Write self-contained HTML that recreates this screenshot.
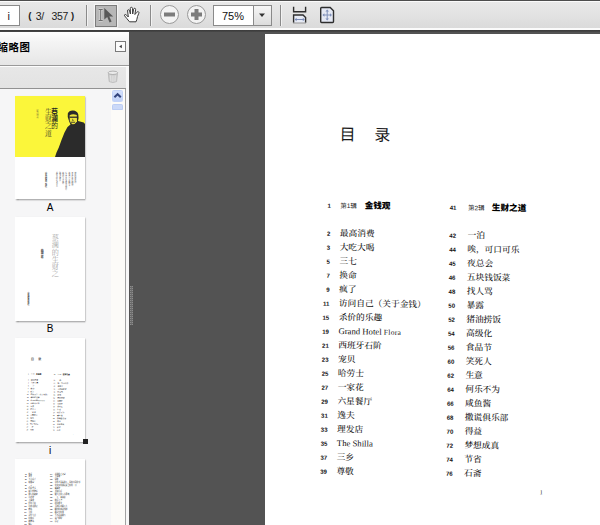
<!DOCTYPE html>
<html lang="zh-CN">
<head>
<meta charset="utf-8">
<title>PDF</title>
<style>
html,body{margin:0;padding:0;}
body{width:600px;height:525px;overflow:hidden;position:relative;background:#535353;font-family:"Liberation Sans","Noto Sans CJK SC",sans-serif;}
.abs{position:absolute;}
#toolbar{left:0;top:0;width:600px;height:30px;background:linear-gradient(#4e4e4e 0,#4e4e4e 1px,#fbfbfb 1px,#fbfbfb 2px,#e9e9e9 2px,#e3e3e3 14px,#dadada 28.5px,#fbfbfb 28.5px,#fbfbfb 30px);}
#tbshadow{left:0;top:30px;width:600px;height:2px;background:linear-gradient(#3a3a3a,#484848);}
.sep{width:1px;background:#8a8a8a;top:5px;height:21px;box-shadow:1px 0 0 #f2f2f2;}
#pginput{left:-1px;top:5px;width:19px;height:19px;background:#fff;border:1px solid #8a8a8a;}
#pgi{left:7.6px;top:9px;font-size:11px;line-height:14px;color:#222;}
.pc{top:9px;font-size:10.5px;line-height:14px;color:#222;white-space:pre;letter-spacing:-0.4px;}
#selbtn{left:95px;top:5px;width:20px;height:20px;background:#b7b7b7;border:1px solid #7c7c7c;box-shadow:0 0 1px 1px rgba(255,255,255,.55);}
#zoombox{left:213px;top:5px;width:57px;height:19px;background:#fff;border:1px solid #8a8a8a;}
#zoomdd{left:253px;top:6px;width:17px;height:19px;background:linear-gradient(#f6f6f6,#dcdcdc);border-left:1px solid #8a8a8a;}
#zoomtxt{left:213.5px;top:8.8px;width:39px;text-align:center;font-size:11px;line-height:14px;color:#111;}
#panel{left:0;top:32px;width:129px;height:493px;background:#efefef;}
#phead{left:0;top:32px;width:129px;height:33px;background:linear-gradient(#ffffff,#f4f4f4 30%,#e6e6e6);}
#pheadline{left:0;top:65px;width:129px;height:1px;background:#9a9a9a;}
#pheadline2{left:0;top:66px;width:129px;height:1px;background:#fdfdfd;}
#ptitle{left:-2.5px;top:39.6px;font-size:10.4px;line-height:16px;font-weight:bold;color:#000;white-space:nowrap;letter-spacing:0.6px;}
#collapse{left:115px;top:41px;width:9px;height:9px;border:1px solid #7a7a7a;background:#fbfbfb;}
#ptool{left:0;top:67px;width:129px;height:21px;background:linear-gradient(#e7e7e7,#e3e3e3);}
#ptoolline{left:0;top:88px;width:126px;height:1px;background:#929292;}
#thumbs{left:0;top:89px;width:111px;height:436px;background:#f6f6f7;}
#sbar{left:111px;top:89px;width:14px;height:436px;background:#fcfbf8;border-right:1px solid #a2a2a2;}
#sbtn{left:112px;top:90px;width:9px;height:10px;background:linear-gradient(#d3e0fc,#c1d2f8);border:1px solid #c3d3f7;border-radius:1.5px;}
#sthumb{left:112px;top:104px;width:9px;height:4px;background:#cbd9f8;border:1px solid #bccdf3;border-radius:1.5px 1.5px 0 0;}
#pright{left:126px;top:67px;width:3px;height:458px;background:#f7f7f7;}
.thumb{background:#fff;box-shadow:0.5px 1px 1.5px rgba(0,0,0,.45);}
.tlabel{font-size:10px;line-height:12px;width:70px;left:15px;text-align:center;color:#000;}
#page{left:265px;top:34px;width:335px;height:491px;background:#fff;}
.num{font-family:"Liberation Sans",sans-serif;font-weight:bold;font-size:6px;line-height:8px;color:#111;width:14px;text-align:right;}
.ent{font-family:"Liberation Serif","Noto Serif CJK SC",serif;font-size:8.7px;line-height:12px;color:#111;font-weight:500;white-space:nowrap;}
.ji{font-family:"Liberation Sans","Noto Sans CJK SC",sans-serif;font-size:6.5px;line-height:8px;color:#222;white-space:nowrap;}
.ttl{font-size:16px;line-height:22px;font-weight:400;color:#1a1a1a;white-space:pre;font-family:"Liberation Sans","Noto Sans CJK SC",sans-serif;letter-spacing:18.7px;}
.pno{font-family:"Liberation Serif",serif;font-size:6px;line-height:8px;color:#222;}
.vt{writing-mode:vertical-rl;overflow:visible;}
.mini{left:0;top:0;width:335px;height:491px;transform-origin:0 0;}
.mini .ent{font-weight:600;color:#111;}
.mini .num,.mini .ji{color:#111;font-size:6.5px;}
.hd{font-family:"Liberation Sans","Noto Sans CJK SC",sans-serif;font-size:8.6px;font-weight:900;line-height:12px;color:#000;white-space:nowrap;}
</style>
</head>
<body>
<!-- main page -->
<div id="page" class="abs">
<div class="abs skew" style="left:0;top:0;width:335px;height:491px;transform-origin:75.3px 171.4px;transform:matrix(1,0.0165,-0.0144,1,0,0);">
<div class="abs ttl" style="left:73.60px;top:90.20px;">目录</div>
<div class="abs num" style="left:51.80px;top:167.70px">1</div>
<div class="abs ji" style="left:75.30px;top:167.70px">第1辑</div>
<div class="abs hd" style="left:99.70px;top:164.60px">金钱观</div>
<div class="abs num" style="left:51.80px;top:196.40px">2</div>
<div class="abs ent" style="left:75.30px;top:193.00px">最高消费</div>
<div class="abs num" style="left:51.80px;top:210.39px">3</div>
<div class="abs ent" style="left:75.30px;top:206.99px">大吃大喝</div>
<div class="abs num" style="left:51.80px;top:224.38px">5</div>
<div class="abs ent" style="left:75.30px;top:220.98px">三七</div>
<div class="abs num" style="left:51.80px;top:238.37px">7</div>
<div class="abs ent" style="left:75.30px;top:234.97px">换命</div>
<div class="abs num" style="left:51.80px;top:252.36px">9</div>
<div class="abs ent" style="left:75.30px;top:248.96px">疯了</div>
<div class="abs num" style="left:51.80px;top:266.35px">11</div>
<div class="abs ent" style="left:75.30px;top:262.95px">访问自己（关于金钱）</div>
<div class="abs num" style="left:51.80px;top:280.34px">15</div>
<div class="abs ent" style="left:75.30px;top:276.94px">杀价的乐趣</div>
<div class="abs num" style="left:51.80px;top:294.33px">19</div>
<div class="abs ent" style="left:75.30px;top:290.93px">Grand Hotel <span style="font-size:7.5px;letter-spacing:.3px">Flora</span></div>
<div class="abs num" style="left:51.80px;top:308.32px">21</div>
<div class="abs ent" style="left:75.30px;top:304.92px">西班牙石阶</div>
<div class="abs num" style="left:51.80px;top:322.31px">23</div>
<div class="abs ent" style="left:75.30px;top:318.91px">宠贝</div>
<div class="abs num" style="left:51.80px;top:336.30px">25</div>
<div class="abs ent" style="left:75.30px;top:332.90px">哈劳士</div>
<div class="abs num" style="left:51.80px;top:350.29px">27</div>
<div class="abs ent" style="left:75.30px;top:346.89px">一家花</div>
<div class="abs num" style="left:51.80px;top:364.28px">29</div>
<div class="abs ent" style="left:75.30px;top:360.88px">六星餐厅</div>
<div class="abs num" style="left:51.80px;top:378.27px">31</div>
<div class="abs ent" style="left:75.30px;top:374.87px">逸夫</div>
<div class="abs num" style="left:51.80px;top:392.26px">33</div>
<div class="abs ent" style="left:75.30px;top:388.86px">理发店</div>
<div class="abs num" style="left:51.80px;top:406.25px">35</div>
<div class="abs ent" style="left:75.30px;top:402.85px">The Shilla</div>
<div class="abs num" style="left:51.80px;top:420.24px">37</div>
<div class="abs ent" style="left:75.30px;top:416.84px">三乡</div>
<div class="abs num" style="left:51.80px;top:434.23px">39</div>
<div class="abs ent" style="left:75.30px;top:430.83px">尊敬</div>
<div class="abs num" style="left:177.50px;top:167.70px">41</div>
<div class="abs ji" style="left:203.00px;top:167.70px">第2辑</div>
<div class="abs hd" style="left:226.90px;top:164.60px">生财之道</div>
<div class="abs num" style="left:177.50px;top:196.40px">42</div>
<div class="abs ent" style="left:202.90px;top:193.00px">一泊</div>
<div class="abs num" style="left:177.50px;top:210.39px">44</div>
<div class="abs ent" style="left:202.90px;top:206.99px">唉，可口可乐</div>
<div class="abs num" style="left:177.50px;top:224.38px">45</div>
<div class="abs ent" style="left:202.90px;top:220.98px">夜总会</div>
<div class="abs num" style="left:177.50px;top:238.37px">46</div>
<div class="abs ent" style="left:202.90px;top:234.97px">五块钱饭菜</div>
<div class="abs num" style="left:177.50px;top:252.36px">48</div>
<div class="abs ent" style="left:202.90px;top:248.96px">找人骂</div>
<div class="abs num" style="left:177.50px;top:266.35px">50</div>
<div class="abs ent" style="left:202.90px;top:262.95px">暴露</div>
<div class="abs num" style="left:177.50px;top:280.34px">52</div>
<div class="abs ent" style="left:202.90px;top:276.94px">猪油捞饭</div>
<div class="abs num" style="left:177.50px;top:294.33px">54</div>
<div class="abs ent" style="left:202.90px;top:290.93px">高级化</div>
<div class="abs num" style="left:177.50px;top:308.32px">56</div>
<div class="abs ent" style="left:202.90px;top:304.92px">食品节</div>
<div class="abs num" style="left:177.50px;top:322.31px">60</div>
<div class="abs ent" style="left:202.90px;top:318.91px">笑死人</div>
<div class="abs num" style="left:177.50px;top:336.30px">62</div>
<div class="abs ent" style="left:202.90px;top:332.90px">生意</div>
<div class="abs num" style="left:177.50px;top:350.29px">64</div>
<div class="abs ent" style="left:202.90px;top:346.89px">何乐不为</div>
<div class="abs num" style="left:177.50px;top:364.28px">66</div>
<div class="abs ent" style="left:202.90px;top:360.88px">咸鱼酱</div>
<div class="abs num" style="left:177.50px;top:378.27px">68</div>
<div class="abs ent" style="left:202.90px;top:374.87px">撒谎俱乐部</div>
<div class="abs num" style="left:177.50px;top:392.26px">70</div>
<div class="abs ent" style="left:202.90px;top:388.86px">得益</div>
<div class="abs num" style="left:177.50px;top:406.25px">72</div>
<div class="abs ent" style="left:202.90px;top:402.85px">梦想成真</div>
<div class="abs num" style="left:177.50px;top:420.24px">74</div>
<div class="abs ent" style="left:202.90px;top:416.84px">节省</div>
<div class="abs num" style="left:177.50px;top:434.23px">76</div>
<div class="abs ent" style="left:202.90px;top:430.83px">石斋</div>
<div class="abs pno" style="left:278.90px;top:451.40px">1</div>
</div>
</div>

<!-- toolbar -->
<div id="toolbar" class="abs"></div>
<div id="tbshadow" class="abs"></div>
<div id="pginput" class="abs"></div>
<div id="pgi" class="abs">i</div>
<div class="abs pc" style="left:28.3px;font-weight:bold;font-size:9.5px;top:8.6px">(</div><div class="abs pc" style="left:35.8px">3/</div><div class="abs pc" style="left:51.6px">357</div><div class="abs pc" style="left:71px;font-weight:bold;font-size:9.5px;top:8.6px">)</div>
<div class="abs sep" style="left:86px"></div>
<div id="selbtn" class="abs"></div>
<div class="abs sep" style="left:150px"></div>
<div id="zoombox" class="abs"></div>
<div id="zoomdd" class="abs"></div>
<div id="zoomtxt" class="abs">75%</div>
<div class="abs sep" style="left:280px"></div>
<svg class="abs" style="left:0;top:0" width="600" height="30" viewBox="0 0 600 30">
  <!-- select tool: I-beam + arrow -->
  <path d="M98.7 9.5h4M98.7 20.5h4M100.7 9.5v11" stroke="#dedede" stroke-width="2.6" fill="none" opacity=".7"/>
  <path d="M98.7 9.5h4M98.7 20.5h4M100.7 9.5v11" stroke="#6e6e6e" stroke-width="1" fill="none"/>
  <path d="M104.3 8 L104.3 19.5 L107.2 17 L109.6 22.4 L111.6 21.5 L109.3 16.5 L113.2 16.5 Z" fill="#585858"/>
  <!-- hand -->
  <path d="M129.5 21.8 L126.8 18.5 L124.6 15.8 Q124 14.8 124.9 14.5 Q125.8 14.3 126.6 15.2 L128.3 17 L127.6 11 Q127.4 9.8 128.4 9.7 Q129.4 9.6 129.6 10.8 L130.4 14 L130.3 8.5 Q130.3 7.3 131.4 7.3 Q132.5 7.3 132.5 8.5 L132.7 14 L133.6 9.2 Q133.8 8.1 134.8 8.3 Q135.8 8.5 135.6 9.6 L134.9 14.5 L137 12.2 Q137.6 11.3 138.5 11.8 Q139.3 12.4 138.8 13.3 L137.5 16.5 Q137 19.5 136 21.8 Z" fill="#fff" stroke="#3a3a3a" stroke-width="1" stroke-linejoin="round"/>
  <!-- zoom out -->
  <circle cx="169.5" cy="14.5" r="9" fill="#f3f3f3" stroke="#9a9a9a" stroke-width="1"/>
  <rect x="164" y="12.5" width="11" height="4" fill="#7c7c7c"/>
  <!-- zoom in -->
  <circle cx="196.5" cy="14.5" r="9" fill="#f3f3f3" stroke="#9a9a9a" stroke-width="1"/>
  <rect x="191" y="12.5" width="11" height="4" fill="#7c7c7c"/>
  <rect x="194.5" y="9" width="4" height="11" fill="#7c7c7c"/>
  <!-- dropdown arrow -->
  <path d="M259 13.5h6l-3 3.5z" fill="#333"/>
  <!-- fit width -->
  <g>
    <path d="M293.6 6.8v4.9h12v-4.9" fill="none" stroke="#2e2e2e" stroke-width="1.4"/>
    <path d="M293.6 22.8v-7.8h9.4l2.6 2.6v5.2" fill="#e7ebf5" stroke="#2e2e2e" stroke-width="1.4"/>
    <path d="M293 23h13" stroke="#8f8f8f" stroke-width="0.9"/>
    <path d="M295.5 19.5h8.5" stroke="#7b8cb6" stroke-width="1"/>
    <path d="M294.6 19.5l2-1.8v3.6zM304.8 19.5l-2-1.8v3.6z" fill="#7b8cb6"/>
  </g>
  <!-- fit page -->
  <g>
    <path d="M320.7 8.4q0-0.9 0.9-0.9h8.6l3.3 3.3v10.8q0 0.9-0.9 0.9h-11q-0.9 0-0.9-0.9z" fill="#e5e9f4" stroke="#2e2e2e" stroke-width="1.4"/>
    <path d="M323.5 15h7.5M327.2 11v8" stroke="#8091ba" stroke-width="1"/>
    <path d="M322.4 15l2-1.8v3.6zM332 15l-2-1.8v3.6zM327.2 9.6l-1.8 2h3.6zM327.2 20.4l-1.8-2h3.6z" fill="#8091ba"/>
  </g>
</svg>

<!-- left panel -->
<div id="panel" class="abs"></div>
<div id="phead" class="abs"></div>
<div id="pheadline" class="abs"></div>
<div id="pheadline2" class="abs"></div>
<div id="ptitle" class="abs">缩略图</div>
<div id="collapse" class="abs"></div>
<svg class="abs" style="left:115px;top:41px" width="11" height="11"><path d="M6.8 3.7v3.6l-2.6-1.8z" fill="#3a3a3a"/></svg>
<div id="ptool" class="abs"></div>
<div id="ptoolline" class="abs"></div>
<div id="thumbs" class="abs"></div>
<div id="sbar" class="abs"></div>
<div id="sbtn" class="abs"></div>
<div id="sthumb" class="abs"></div>
<div id="pright" class="abs"></div>
<svg class="abs" style="left:100px;top:65px" width="25" height="25" viewBox="100 65 25 25">
  <path d="M108.3 73.6L109.2 81.6Q112.9 83.4 116.6 81.6L117.5 73.6Z" fill="#cfcfcf" stroke="#b3b3b3" stroke-width="0.7"/>
  <path d="M110.5 75.5L110.9 81.5M112.9 75.8V82M115.3 75.5L114.9 81.5" stroke="#e4e4e4" stroke-width="0.9" fill="none"/>
  <ellipse cx="112.9" cy="72.8" rx="4.8" ry="1.7" fill="#ebebeb" stroke="#aaaaaa" stroke-width="0.9"/>
</svg>
<svg class="abs" style="left:110px;top:88px" width="16" height="16" viewBox="110 88 16 16"><path d="M114.4 97.3L117.6 94.2L120.8 97.3" fill="none" stroke="#33457e" stroke-width="2"/></svg>

<!-- thumbnails -->
<div class="abs thumb" style="left:15px;top:96px;width:70px;height:103px;"></div>
<div class="abs" style="left:15px;top:96px;width:70px;height:61px;background:#fbf63a;"></div>
<svg class="abs" style="left:15px;top:96px" width="70" height="61" viewBox="0 0 70 61">
  <path d="M40 61 L41.5 56.5 L43.8 51.5 L46.5 44 L49.5 36.5 L52.5 31 L55.5 28.5 L54.2 25.5 Q52 21 52.8 17.5 Q54 14.3 58 14.5 Q62.3 14.8 63.3 18.5 Q64 22 63 25 L68.7 26.5 L70 28 L70 61 Z" fill="#2b2b2b"/>
  <path d="M54.6 19.2 Q58 17.2 61.8 19 L62 25.5 Q60 28.5 57.5 28.3 Q55.5 27.5 54.8 24.5 Z" fill="#ece33c"/>
  <path d="M54.6 20.6h7.4v1.5h-7.4zM57.6 22.5l1.2 2.2h-1.6zM56 25.7h4v1h-4z" fill="#2b2b2b" opacity=".85"/>
</svg>
<div class="abs vt" style="left:49.7px;top:108px;width:8px;font-size:6.7px;line-height:8px;letter-spacing:0.5px;color:#2a2a20;"><b>蔡澜</b>的</div>
<div class="abs vt" style="left:43.4px;top:108px;width:8px;font-size:6.8px;line-height:8px;letter-spacing:0.45px;color:#4d4a2c;font-family:'Liberation Serif','Noto Serif CJK SC',serif;">生财之道</div>
<div class="abs vt" style="left:34.5px;top:109.7px;width:4px;font-size:2.4px;line-height:4px;color:#77733a;">蔡澜 著</div>
<div class="abs vt" style="left:44.5px;top:172px;width:4px;font-size:2.15px;line-height:4px;color:#444;font-weight:bold;">山东画报出版社</div>
<div class="abs vt" style="left:55px;top:172px;width:22px;height:20px;font-size:1.8px;line-height:3.1px;color:#666;white-space:nowrap;">钱是赚来花的<br>不是存来看的把钱<br>花在自己喜欢的事<br>情上才算没有白活懂得<br>花钱的人才懂得<br>赚钱这就是<br>我的生财之道人生</div>
<div class="abs tlabel" style="top:201.5px;">A</div>

<div class="abs thumb" style="left:15px;top:217px;width:70px;height:104px;"></div>
<div class="abs vt" style="left:49.3px;top:233.6px;width:9px;font-size:7.1px;line-height:9px;letter-spacing:0.1px;color:#a8a8a8;font-family:'Liberation Serif','Noto Serif CJK SC',serif;">蔡澜的生财之</div>
<div class="abs vt" style="left:40.2px;top:249px;width:4px;font-size:2.9px;line-height:4px;color:#444;font-weight:bold;">蔡澜 著</div>
<div class="abs vt" style="left:27px;top:291.8px;width:4px;font-size:1.9px;line-height:4px;color:#333;font-weight:bold;">山东画报出版社</div>
<div class="abs tlabel" style="top:322.5px;">B</div>

<div class="abs thumb" style="left:15px;top:338px;width:70px;height:104px;overflow:hidden;"><div class="abs mini" style="transform:scale(0.21);">
<div class="abs skew" style="left:0;top:0;width:335px;height:491px;transform-origin:75.3px 171.4px;transform:matrix(1,0.0165,-0.0144,1,0,0);">
<div class="abs ttl" style="left:73.60px;top:90.20px;">目录</div>
<div class="abs num" style="left:51.80px;top:167.70px">1</div>
<div class="abs ji" style="left:75.30px;top:167.70px">第1辑</div>
<div class="abs hd" style="left:99.70px;top:164.60px">金钱观</div>
<div class="abs num" style="left:51.80px;top:196.40px">2</div>
<div class="abs ent" style="left:75.30px;top:193.00px">最高消费</div>
<div class="abs num" style="left:51.80px;top:210.39px">3</div>
<div class="abs ent" style="left:75.30px;top:206.99px">大吃大喝</div>
<div class="abs num" style="left:51.80px;top:224.38px">5</div>
<div class="abs ent" style="left:75.30px;top:220.98px">三七</div>
<div class="abs num" style="left:51.80px;top:238.37px">7</div>
<div class="abs ent" style="left:75.30px;top:234.97px">换命</div>
<div class="abs num" style="left:51.80px;top:252.36px">9</div>
<div class="abs ent" style="left:75.30px;top:248.96px">疯了</div>
<div class="abs num" style="left:51.80px;top:266.35px">11</div>
<div class="abs ent" style="left:75.30px;top:262.95px">访问自己（关于金钱）</div>
<div class="abs num" style="left:51.80px;top:280.34px">15</div>
<div class="abs ent" style="left:75.30px;top:276.94px">杀价的乐趣</div>
<div class="abs num" style="left:51.80px;top:294.33px">19</div>
<div class="abs ent" style="left:75.30px;top:290.93px">Grand Hotel <span style="font-size:7.5px;letter-spacing:.3px">Flora</span></div>
<div class="abs num" style="left:51.80px;top:308.32px">21</div>
<div class="abs ent" style="left:75.30px;top:304.92px">西班牙石阶</div>
<div class="abs num" style="left:51.80px;top:322.31px">23</div>
<div class="abs ent" style="left:75.30px;top:318.91px">宠贝</div>
<div class="abs num" style="left:51.80px;top:336.30px">25</div>
<div class="abs ent" style="left:75.30px;top:332.90px">哈劳士</div>
<div class="abs num" style="left:51.80px;top:350.29px">27</div>
<div class="abs ent" style="left:75.30px;top:346.89px">一家花</div>
<div class="abs num" style="left:51.80px;top:364.28px">29</div>
<div class="abs ent" style="left:75.30px;top:360.88px">六星餐厅</div>
<div class="abs num" style="left:51.80px;top:378.27px">31</div>
<div class="abs ent" style="left:75.30px;top:374.87px">逸夫</div>
<div class="abs num" style="left:51.80px;top:392.26px">33</div>
<div class="abs ent" style="left:75.30px;top:388.86px">理发店</div>
<div class="abs num" style="left:51.80px;top:406.25px">35</div>
<div class="abs ent" style="left:75.30px;top:402.85px">The Shilla</div>
<div class="abs num" style="left:51.80px;top:420.24px">37</div>
<div class="abs ent" style="left:75.30px;top:416.84px">三乡</div>
<div class="abs num" style="left:51.80px;top:434.23px">39</div>
<div class="abs ent" style="left:75.30px;top:430.83px">尊敬</div>
<div class="abs num" style="left:177.50px;top:167.70px">41</div>
<div class="abs ji" style="left:203.00px;top:167.70px">第2辑</div>
<div class="abs hd" style="left:226.90px;top:164.60px">生财之道</div>
<div class="abs num" style="left:177.50px;top:196.40px">42</div>
<div class="abs ent" style="left:202.90px;top:193.00px">一泊</div>
<div class="abs num" style="left:177.50px;top:210.39px">44</div>
<div class="abs ent" style="left:202.90px;top:206.99px">唉，可口可乐</div>
<div class="abs num" style="left:177.50px;top:224.38px">45</div>
<div class="abs ent" style="left:202.90px;top:220.98px">夜总会</div>
<div class="abs num" style="left:177.50px;top:238.37px">46</div>
<div class="abs ent" style="left:202.90px;top:234.97px">五块钱饭菜</div>
<div class="abs num" style="left:177.50px;top:252.36px">48</div>
<div class="abs ent" style="left:202.90px;top:248.96px">找人骂</div>
<div class="abs num" style="left:177.50px;top:266.35px">50</div>
<div class="abs ent" style="left:202.90px;top:262.95px">暴露</div>
<div class="abs num" style="left:177.50px;top:280.34px">52</div>
<div class="abs ent" style="left:202.90px;top:276.94px">猪油捞饭</div>
<div class="abs num" style="left:177.50px;top:294.33px">54</div>
<div class="abs ent" style="left:202.90px;top:290.93px">高级化</div>
<div class="abs num" style="left:177.50px;top:308.32px">56</div>
<div class="abs ent" style="left:202.90px;top:304.92px">食品节</div>
<div class="abs num" style="left:177.50px;top:322.31px">60</div>
<div class="abs ent" style="left:202.90px;top:318.91px">笑死人</div>
<div class="abs num" style="left:177.50px;top:336.30px">62</div>
<div class="abs ent" style="left:202.90px;top:332.90px">生意</div>
<div class="abs num" style="left:177.50px;top:350.29px">64</div>
<div class="abs ent" style="left:202.90px;top:346.89px">何乐不为</div>
<div class="abs num" style="left:177.50px;top:364.28px">66</div>
<div class="abs ent" style="left:202.90px;top:360.88px">咸鱼酱</div>
<div class="abs num" style="left:177.50px;top:378.27px">68</div>
<div class="abs ent" style="left:202.90px;top:374.87px">撒谎俱乐部</div>
<div class="abs num" style="left:177.50px;top:392.26px">70</div>
<div class="abs ent" style="left:202.90px;top:388.86px">得益</div>
<div class="abs num" style="left:177.50px;top:406.25px">72</div>
<div class="abs ent" style="left:202.90px;top:402.85px">梦想成真</div>
<div class="abs num" style="left:177.50px;top:420.24px">74</div>
<div class="abs ent" style="left:202.90px;top:416.84px">节省</div>
<div class="abs num" style="left:177.50px;top:434.23px">76</div>
<div class="abs ent" style="left:202.90px;top:430.83px">石斋</div>
<div class="abs pno" style="left:278.90px;top:451.40px">1</div>
</div>
</div></div>
<div class="abs" style="left:83px;top:439px;width:4.5px;height:4.5px;background:#222;"></div>
<div class="abs tlabel" style="top:444.5px;">i</div>

<div class="abs thumb" style="left:15px;top:459px;width:70px;height:70px;overflow:hidden;"><div class="abs mini" style="transform:scale(0.21);">
<div class="abs num" style="left:40.80px;top:68.40px">78</div>
<div class="abs ent" style="left:64.30px;top:65.00px">股市</div>
<div class="abs num" style="left:40.80px;top:82.39px">80</div>
<div class="abs ent" style="left:64.30px;top:78.99px">黄金</div>
<div class="abs num" style="left:40.80px;top:96.38px">82</div>
<div class="abs ent" style="left:64.30px;top:92.98px">买卖房子</div>
<div class="abs num" style="left:40.80px;top:110.37px">84</div>
<div class="abs ent" style="left:64.30px;top:106.97px">收藏家</div>
<div class="abs num" style="left:40.80px;top:124.36px">86</div>
<div class="abs ent" style="left:64.30px;top:120.96px">一元</div>
<div class="abs num" style="left:40.80px;top:138.35px">88</div>
<div class="abs ent" style="left:64.30px;top:134.95px">打折季节</div>
<div class="abs num" style="left:40.80px;top:152.34px">90</div>
<div class="abs ent" style="left:64.30px;top:148.94px">网上购物乐</div>
<div class="abs num" style="left:40.80px;top:166.33px">92</div>
<div class="abs ent" style="left:64.30px;top:162.93px">银行的秘密</div>
<div class="abs num" style="left:40.80px;top:180.32px">94</div>
<div class="abs ent" style="left:64.30px;top:176.92px">小费论</div>
<div class="abs num" style="left:40.80px;top:194.31px">96</div>
<div class="abs ent" style="left:64.30px;top:190.91px">大减价</div>
<div class="abs num" style="left:40.80px;top:208.30px">98</div>
<div class="abs ent" style="left:64.30px;top:204.90px">信用卡奴</div>
<div class="abs num" style="left:40.80px;top:222.29px">100</div>
<div class="abs ent" style="left:64.30px;top:218.89px">讨价还价记</div>
<div class="abs num" style="left:40.80px;top:236.28px">102</div>
<div class="abs ent" style="left:64.30px;top:232.88px">赠品</div>
<div class="abs num" style="left:40.80px;top:250.27px">104</div>
<div class="abs ent" style="left:64.30px;top:246.87px">人情</div>
<div class="abs num" style="left:40.80px;top:264.26px">106</div>
<div class="abs ent" style="left:64.30px;top:260.86px">茶叶生意</div>
<div class="abs num" style="left:40.80px;top:278.25px">108</div>
<div class="abs ent" style="left:64.30px;top:274.85px">旧货店</div>
<div class="abs num" style="left:40.80px;top:292.24px">110</div>
<div class="abs ent" style="left:64.30px;top:288.84px">跳蚤场</div>
<div class="abs num" style="left:40.80px;top:306.23px">112</div>
<div class="abs ent" style="left:64.30px;top:302.83px">赌运</div>
<div class="abs num" style="left:163.50px;top:68.40px">114</div>
<div class="abs ent" style="left:188.90px;top:65.00px">花钱的艺术家</div>
<div class="abs num" style="left:163.50px;top:82.39px">116</div>
<div class="abs ent" style="left:188.90px;top:78.99px">大富翁</div>
<div class="abs num" style="left:163.50px;top:96.38px">118</div>
<div class="abs ent" style="left:188.90px;top:92.98px">算账</div>
<div class="abs num" style="left:163.50px;top:110.37px">120</div>
<div class="abs ent" style="left:188.90px;top:106.97px">怎样才算有钱人，谈何容易的事</div>
<div class="abs num" style="left:163.50px;top:124.36px">122</div>
<div class="abs ent" style="left:188.90px;top:120.96px">用少少的钱过完美好的一日</div>
<div class="abs num" style="left:163.50px;top:138.35px">124</div>
<div class="abs ent" style="left:188.90px;top:134.95px">储蓄论</div>
<div class="abs num" style="left:163.50px;top:152.34px">126</div>
<div class="abs ent" style="left:188.90px;top:148.94px">开间小店</div>
<div class="abs num" style="left:163.50px;top:166.33px">128</div>
<div class="abs ent" style="left:188.90px;top:162.93px">做生意的八个原则</div>
<div class="abs num" style="left:163.50px;top:180.32px">130</div>
<div class="abs ent" style="left:188.90px;top:176.92px">一人一本存折</div>
<div class="abs num" style="left:163.50px;top:194.31px">132</div>
<div class="abs ent" style="left:188.90px;top:190.91px">股东大会</div>
<div class="abs num" style="left:163.50px;top:208.30px">134</div>
<div class="abs ent" style="left:188.90px;top:204.90px">投资眼光</div>
<div class="abs num" style="left:163.50px;top:222.29px">136</div>
<div class="abs ent" style="left:188.90px;top:218.89px">卖掉东西换人生</div>
<div class="abs num" style="left:163.50px;top:236.28px">138</div>
<div class="abs ent" style="left:188.90px;top:232.88px">赚到的都花得掉</div>
<div class="abs num" style="left:163.50px;top:250.27px">140</div>
<div class="abs ent" style="left:188.90px;top:246.87px">便宜没好货</div>
<div class="abs num" style="left:163.50px;top:264.26px">142</div>
<div class="abs ent" style="left:188.90px;top:260.86px">买不起就别买</div>
<div class="abs num" style="left:163.50px;top:278.25px">144</div>
<div class="abs ent" style="left:188.90px;top:274.85px">遗产纠纷</div>
<div class="abs num" style="left:163.50px;top:292.24px">146</div>
<div class="abs ent" style="left:188.90px;top:288.84px">后记</div>
</div></div>


<!-- splitter grip -->
<div class="abs" style="left:130px;top:286px;width:3px;height:39px;background:repeating-linear-gradient(#8d8d8d 0 1px,#676767 1px 2px);"></div><div class="abs" style="left:131px;top:286px;width:1px;height:39px;background:#6d6d6d;opacity:.8"></div>

</body>
</html>
